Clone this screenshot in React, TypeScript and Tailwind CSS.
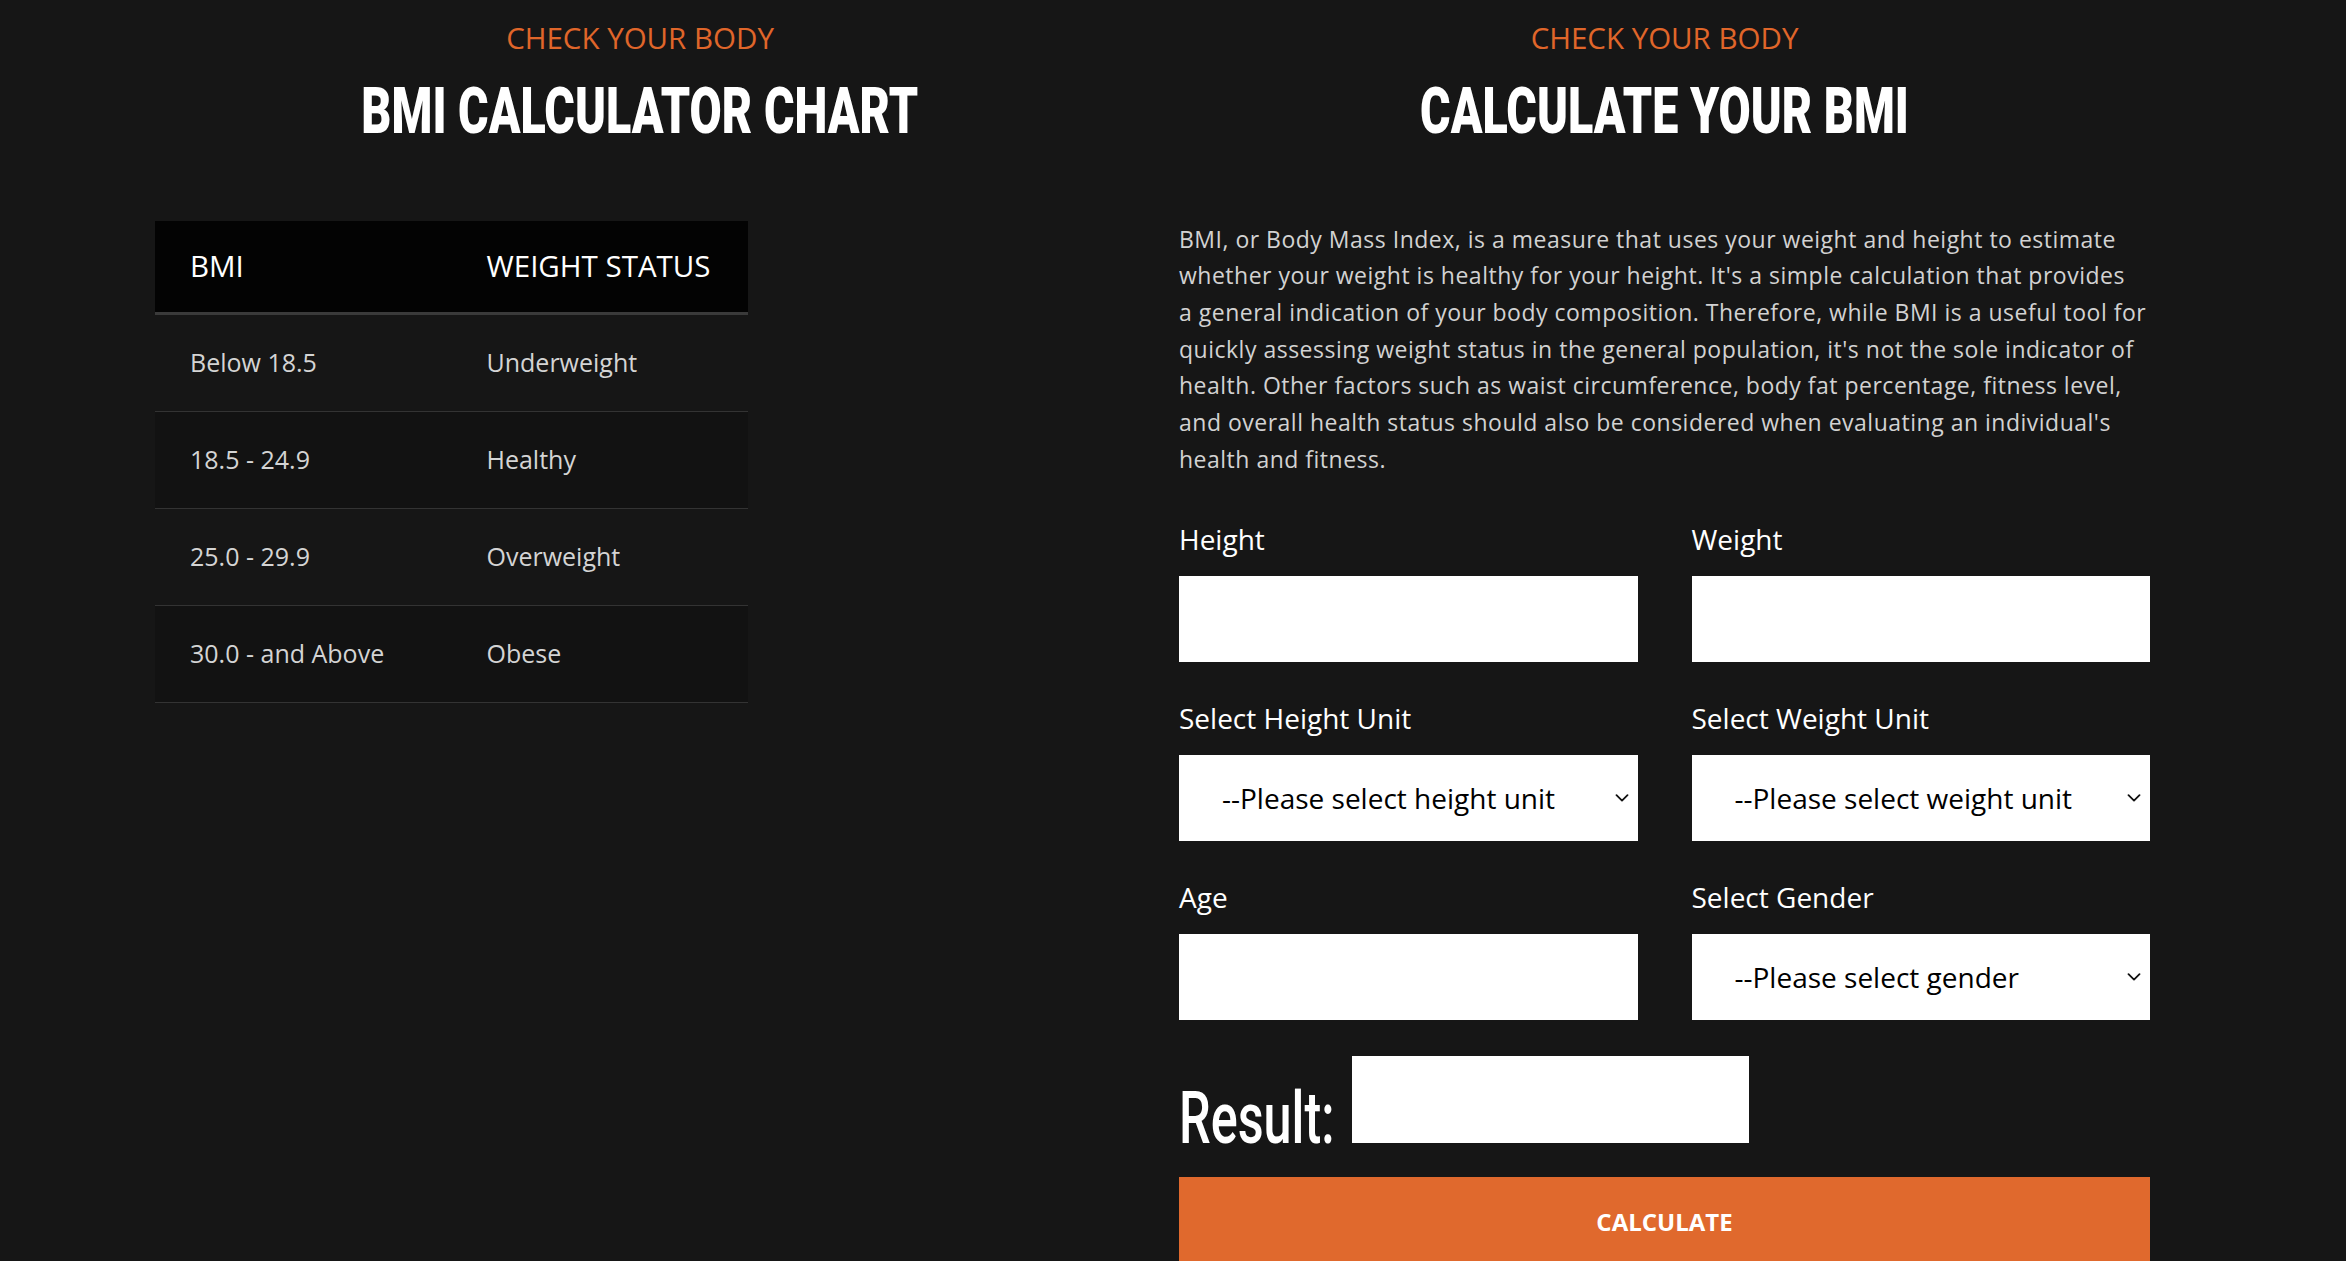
import React from "react";

function Chevron() {
  return (
    <svg
      className="pointer-events-none absolute right-[9px] top-1/2 -translate-y-1/2"
      width="14"
      height="8"
      viewBox="0 0 14 8"
      fill="none"
    >
      <path d="M1.5 1.2 7 6.6l5.5-5.4" stroke="#111" strokeWidth="1.8" strokeLinecap="round" strokeLinejoin="round" />
    </svg>
  );
}

function Field({ label, children }: { label: string; children: React.ReactNode }) {
  return (
    <div className="flex flex-col">
      <label className="text-[28px] leading-none text-white">{label}</label>
      <div className="mt-[23px]">{children}</div>
    </div>
  );
}

function TextBox() {
  return <input type="text" className="block h-[86px] w-full rounded-none border-0 bg-white px-4 text-[28px] text-black outline-none" />;
}

function SelectBox({ text }: { text: string }) {
  return (
    <div className="relative">
      <select className="block h-[86px] w-full appearance-none rounded-none border-0 bg-white pl-[43px] pr-10 font-['Open_Sans',sans-serif] text-[28px] text-black outline-none">
        <option>{text}</option>
      </select>
      <Chevron />
    </div>
  );
}

function SectionTitle({ title }: { title: string }) {
  return (
    <div className="flex flex-col items-center">
      <p className="mt-[23px] text-center text-[29.5px] font-medium leading-none text-[#e0662a]">CHECK YOUR BODY</p>
      <h2 className="mt-[26px] text-center font-['Roboto',sans-serif] text-[65px] font-black leading-none text-white">
        <span className="inline-block origin-center scale-x-[0.718] whitespace-nowrap">{title}</span>
      </h2>
    </div>
  );
}

const rows = [
  ["Below 18.5", "Underweight"],
  ["18.5 - 24.9", "Healthy"],
  ["25.0 - 29.9", "Overweight"],
  ["30.0 - and Above", "Obese"],
];

const paragraph = [
  "BMI, or Body Mass Index, is a measure that uses your weight and height to estimate",
  "whether your weight is healthy for your height. It's a simple calculation that provides",
  "a general indication of your body composition. Therefore, while BMI is a useful tool for",
  "quickly assessing weight status in the general population, it's not the sole indicator of",
  "health. Other factors such as waist circumference, body fat percentage, fitness level,",
  "and overall health status should also be considered when evaluating an individual's",
  "health and fitness.",
];

export default function App() {
  return (
    <div className="h-[1261px] w-full overflow-hidden bg-[#161616] font-['Open_Sans',sans-serif]">
      <div className="flex pl-[128px]">
        {/* Left column */}
        <div className="flex w-[1024px] flex-col px-[27px]">
          <SectionTitle title="BMI CALCULATOR CHART" />
          <div className="mt-[77px] w-[593px]">
            <div className="flex h-[94px] items-center border-b-[3px] border-[#3a3a3a] bg-[#030303] text-[29.5px] text-white">
              <div className="w-1/2 pl-[35px]">BMI</div>
              <div className="w-1/2 pl-[35px]">WEIGHT STATUS</div>
            </div>
            {rows.map((r, i) => (
              <div
                key={r[0]}
                className={
                  "flex h-[97px] items-center border-b border-[#333333] text-[25px] text-[#d4d4d4] " +
                  (i % 2 === 0 ? "bg-[#161616]" : "bg-[#121212]")
                }
              >
                <div className="w-1/2 pl-[35px]">{r[0]}</div>
                <div className="w-1/2 pl-[35px]">{r[1]}</div>
              </div>
            ))}
          </div>
        </div>

        {/* Right column */}
        <div className="flex w-[1024px] flex-col pl-[27px] pr-[26px]">
          <SectionTitle title="CALCULATE YOUR BMI" />
          <p className="mt-[77px] text-[23px] leading-[36.7px] tracking-[0.5px] text-[#d2d2d2]">
            {paragraph.map((line) => (
              <span key={line} className="block whitespace-nowrap">
                {line}
              </span>
            ))}
          </p>

          <div className="mt-[48px] grid grid-cols-2 gap-x-[54px] gap-y-[42px]">
            <Field label="Height">
              <TextBox />
            </Field>
            <Field label="Weight">
              <TextBox />
            </Field>
            <Field label="Select Height Unit">
              <SelectBox text="--Please select height unit" />
            </Field>
            <Field label="Select Weight Unit">
              <SelectBox text="--Please select weight unit" />
            </Field>
            <Field label="Age">
              <TextBox />
            </Field>
            <Field label="Select Gender">
              <SelectBox text="--Please select gender" />
            </Field>
          </div>

          <div className="mt-[36px] font-['Roboto',sans-serif] text-[73px] font-medium leading-none text-white">
            <span className="inline-block w-[156px] whitespace-nowrap">
              <span className="inline-block origin-left scale-x-[0.69]">Result:</span>
            </span>
            <span className="ml-[17px] inline-block h-[87px] w-[397px] bg-white align-baseline"></span>
          </div>

          <button
            type="button"
            className="mt-[22px] flex h-[90px] w-full items-center justify-center bg-[#e0692d] text-[24px] font-bold text-white"
          >
            CALCULATE
          </button>
        </div>
      </div>
    </div>
  );
}
